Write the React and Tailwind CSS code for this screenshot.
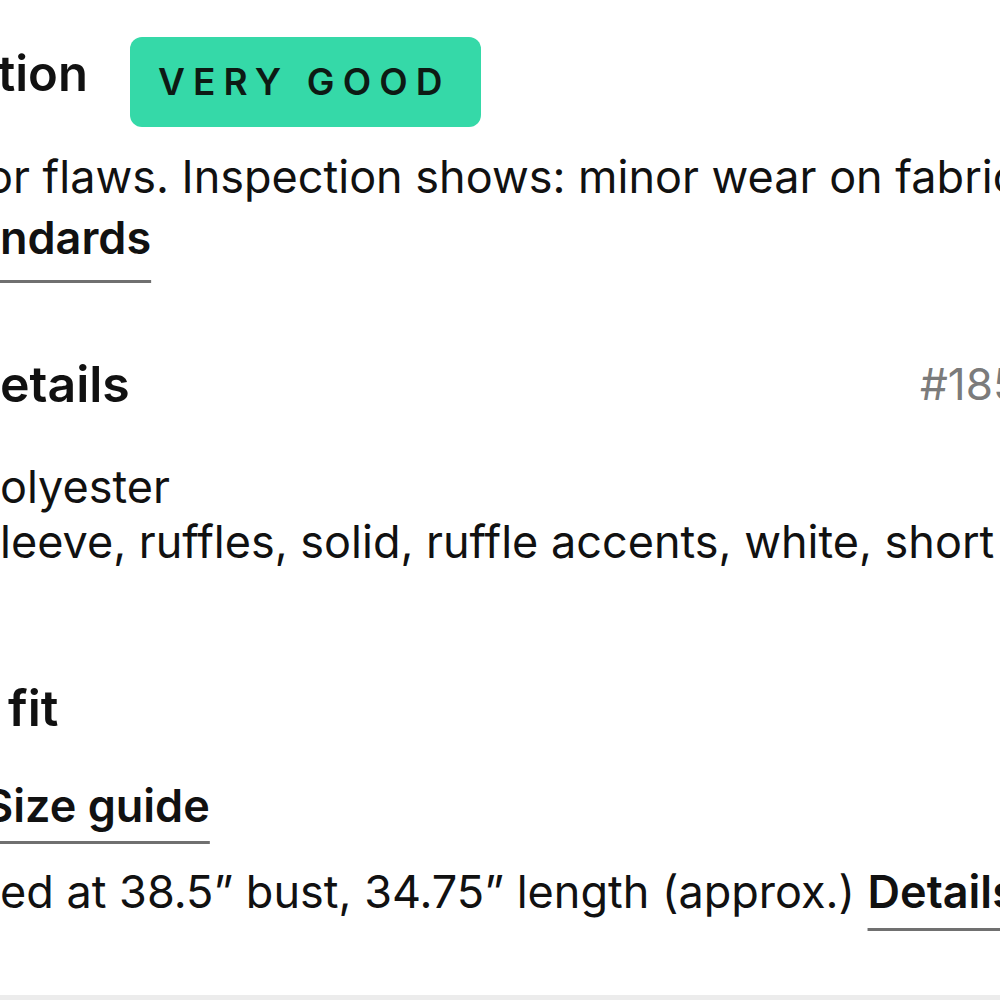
export default function App() {
  const font = { fontFamily: 'Inter, "Noto Sans", sans-serif' }
  return (
    <div className="w-[1000px] h-[1000px] overflow-hidden bg-white text-[#111111] flex flex-col" style={font}>
      <div className="pt-[37px] flex-1 whitespace-nowrap">
        {/* condition */}
        <div className="flex items-start">
          <h2 className="text-[49px] font-semibold leading-[60px] mt-[7px] -ml-[2px] w-[132px] shrink-0">tion</h2>
          <span className="h-[90px] flex items-center rounded-[12px] bg-[#35d9a8] pl-[28px] pr-[30px] text-[37px] font-semibold tracking-[0.22em] text-[#0d1a14]">
            VERY GOOD
          </span>
        </div>
        <p className="mt-[19px] text-[45px] leading-[61px]">
          <span className="block -ml-[14px]">or flaws. Inspection shows: minor wear on fabric.</span>
          <a className="block font-semibold underline decoration-[3px] decoration-[#707070] underline-offset-[26px] w-fit">ndards</a>
        </p>

        {/* details */}
        <div className="mt-[86px] flex items-start">
          <h2 className="w-[920px] shrink-0 text-[50px] font-semibold leading-[60px]">etails</h2>
          <span className="text-[44px] leading-[60px] text-[#7b7b7b]">#1850736</span>
        </div>
        <div className="mt-[45px] text-[45px] leading-[55px]">
          <p>olyester</p>
          <p>leeve, ruffles, solid, ruffle accents, white, short sleeve</p>
        </div>

        {/* fit */}
        <h2 className="mt-[109px] ml-[8px] text-[50px] font-semibold leading-[60px]">fit</h2>
        <p className="mt-[37px] text-[45px] leading-[61px]">
          <a className="inline-block -ml-[16px] font-semibold underline decoration-[3px] decoration-[#707070] underline-offset-[19px]">Size guide</a>
        </p>
        <p className="mt-[25px] text-[45px] leading-[61px]">
          ed at 38.5” bust, 34.75” length (approx.){' '}
          <a className="font-semibold underline decoration-[3px] decoration-[#707070] underline-offset-[20px]">Details</a>
        </p>
      </div>
      <div className="h-[5px] bg-[#ececec]" />
    </div>
  )
}
